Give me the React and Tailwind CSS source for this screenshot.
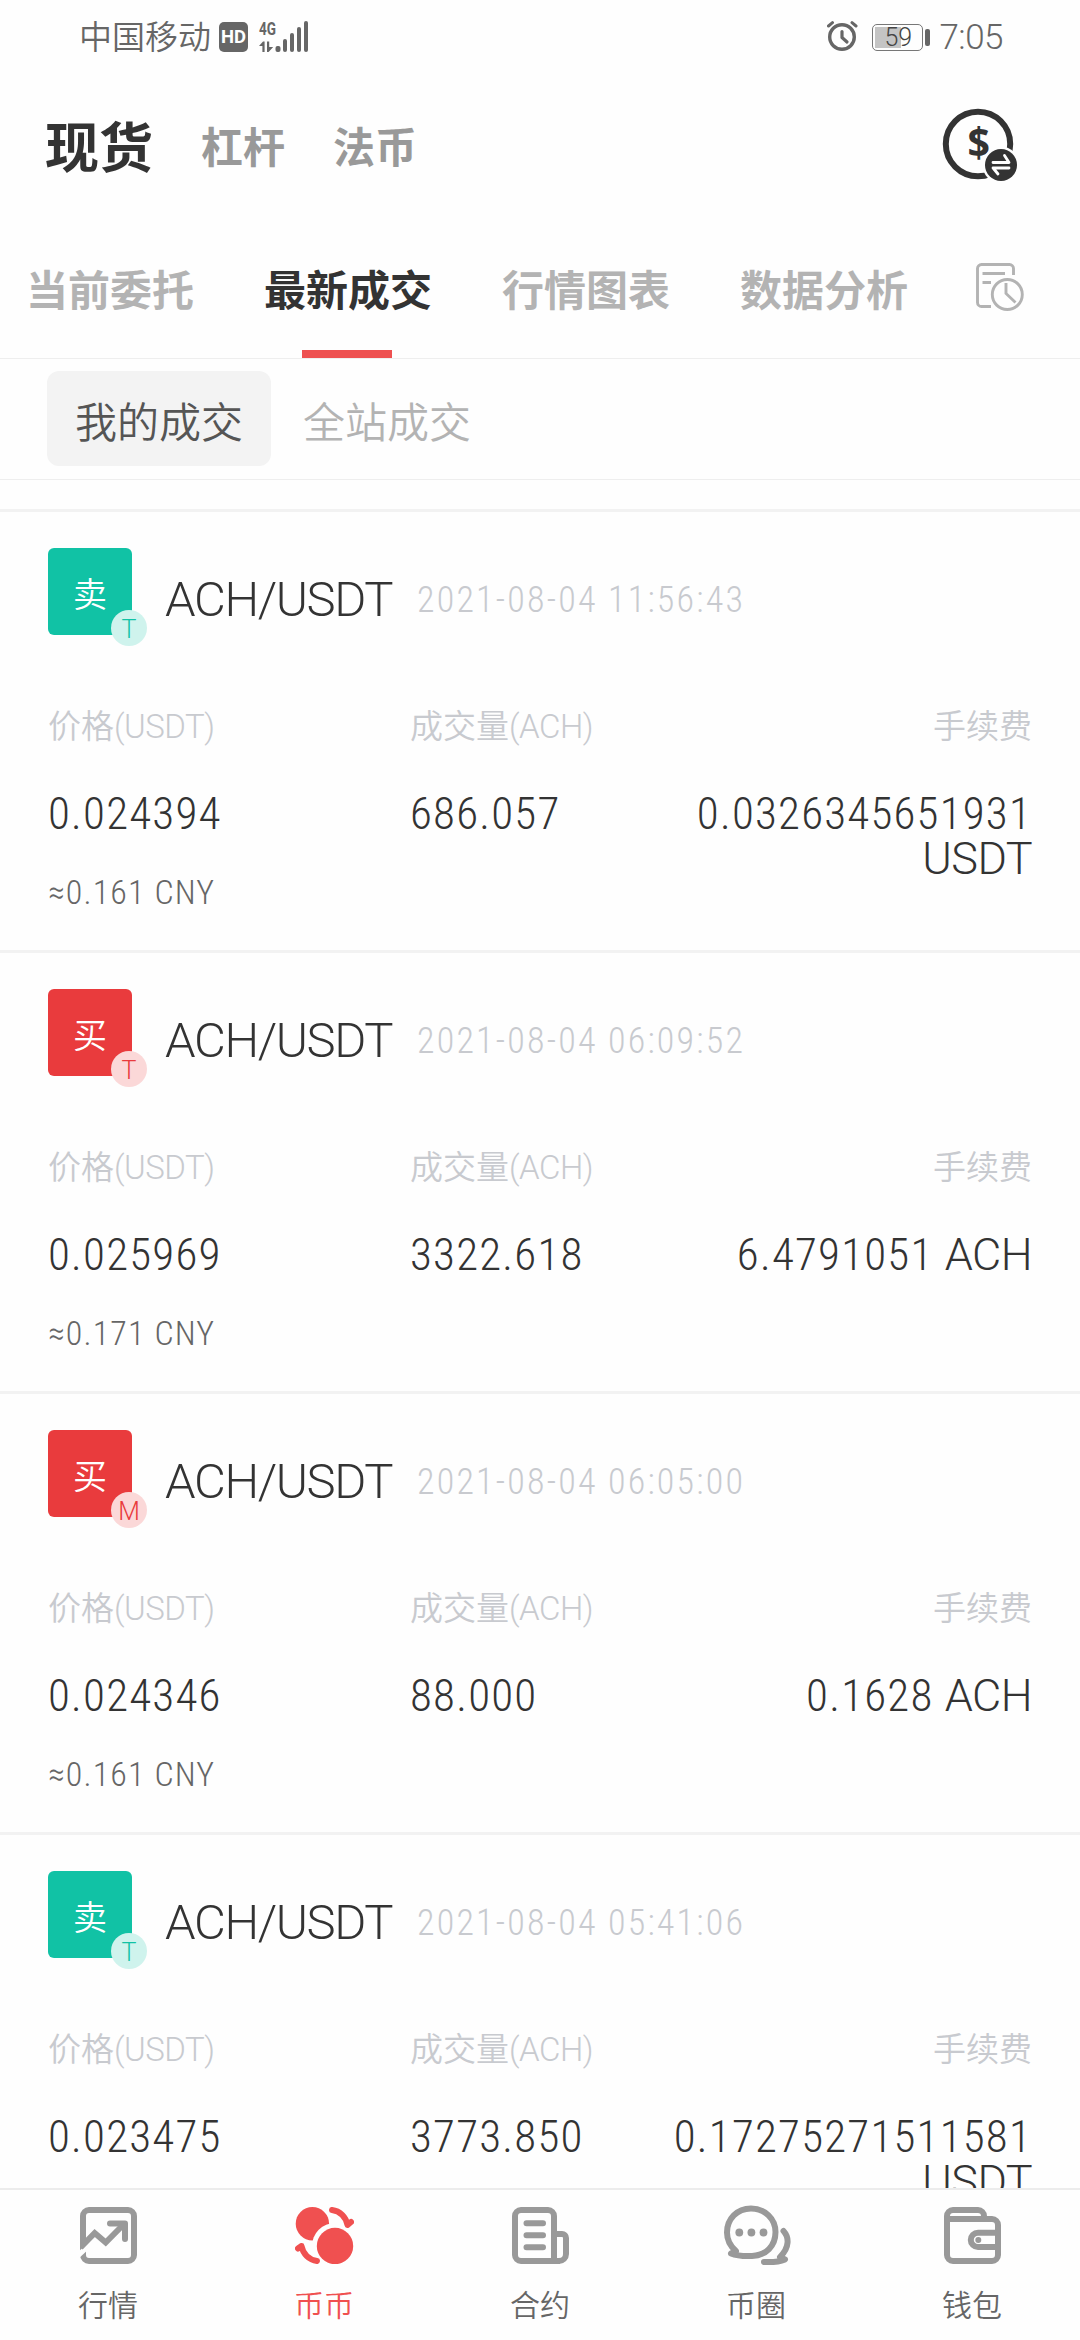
/**
 * Spot trading screen – "my trades" list.
 * All building-blocks live in this one file.
 */

/* ── Data ────────────────────────────────────────────────────────────── */
const TRADES = [
  { side: 'sell', role: 'T', time: '2021-08-04 11:56:43', price: '0.024394', cny: '0.161', amount: '686.057', fee: '0.0326345651931', unit: 'USDT' },
  { side: 'buy', role: 'T', time: '2021-08-04 06:09:52', price: '0.025969', cny: '0.171', amount: '3322.618', fee: '6.4791051', unit: 'ACH' },
  { side: 'buy', role: 'M', time: '2021-08-04 06:05:00', price: '0.024346', cny: '0.161', amount: '88.000', fee: '0.1628', unit: 'ACH' },
  { side: 'sell', role: 'T', time: '2021-08-04 05:41:06', price: '0.023475', amount: '3773.850', fee: '0.17275271511581', unit: 'USDT' },
]

const TABS = ['当前委托', '最新成交', '行情图表', '数据分析']

/* ── Status bar ──────────────────────────────────────────────────────── */
function SignalIcon() {
  return (
    <svg width="50" height="32" viewBox="0 0 50 32" fill="#666" className="ml-[11px] overflow-visible">
      <text x="0" y="13.5" fontSize="19" fontWeight="700" textLength="17" lengthAdjust="spacingAndGlyphs">4G</text>
      <path d="M0 25l4-4.5h1.6V31H3.4v-6zM8 20.5h2.2v5.5h4L9.6 31H8z" />
      <rect x="16.5" y="25" width="5" height="6" rx="2" />
      <rect x="24" y="18" width="4" height="13" rx="2" />
      <rect x="31" y="12" width="4" height="19" rx="2" />
      <rect x="38" y="6" width="4" height="25" rx="2" />
      <rect x="45" y="0" width="4" height="31" rx="2" />
    </svg>
  )
}

function AlarmIcon() {
  return (
    <svg width="31" height="32" viewBox="0 0 31 32" fill="none" stroke="#666" strokeLinecap="round">
      <circle cx="15" cy="16" r="12.3" strokeWidth="3.4" />
      <path d="M15 10.5V16.5L20 21" strokeWidth="3.2" strokeLinejoin="round" />
      <path d="M1.5 5L5.5 1.7M25 1.7L29 5" strokeWidth="3" />
    </svg>
  )
}

function StatusBar() {
  return (
    <div className="flex h-[74px] shrink-0 items-center pr-[77px] pl-[79px] text-[#666]">
      <span className="text-[33px] leading-none font-[350]">中国移动</span>
      <span className="ml-2 flex h-[30px] w-[29px] items-center justify-center rounded-[5px] bg-[#666] text-[18.5px] leading-none font-bold text-white">
        HD
      </span>
      <SignalIcon />
      <div className="ml-auto flex items-center">
        <AlarmIcon />
        <div className="ml-[14px] flex h-[27px] w-[51px] items-center rounded-[5px] border-[1.5px] border-[#777] p-[2px]">
          <div className="flex h-full w-[26px] items-center bg-[#c4c4c4] pl-[9px] text-[25px] leading-none font-light text-[#444]">59</div>
        </div>
        <div className="ml-[2px] h-[17px] w-[5px] rounded-[2px] bg-[#666]" />
        <span className="ml-[9px] text-[35px] leading-none font-[350] tracking-[-0.5px]">7:05</span>
      </div>
    </div>
  )
}

/* ── Header ──────────────────────────────────────────────────────────── */
function ExchangeIcon() {
  return (
    <svg width="76" height="74" viewBox="0 0 76 74" fill="none">
      <circle cx="36" cy="36" r="32.2" stroke="#333" strokeWidth="6" />
      <text x="25.5" y="49" fontSize="42" fontWeight="700" textLength="22.5" lengthAdjust="spacingAndGlyphs" fill="#333" fontFamily="Noto Sans, sans-serif">$</text>
      <circle cx="59" cy="57" r="18.5" fill="#fefefe" />
      <circle cx="59" cy="57" r="16" fill="#333" />
      <path d="M51 54.500H67L62.500 47.500M67 60H51M51.500 60.500L56 66" stroke="#fff" strokeWidth="2.800" strokeLinecap="round" strokeLinejoin="round" />
    </svg>
  )
}

function Header() {
  return (
    <header className="flex h-[148px] shrink-0 items-center gap-12 pr-[62px] pl-[45px] font-bold">
      <h1 className="pt-[3px] text-[54px] leading-none text-[#333]">现货</h1>
      <span className="pt-[2px] text-[42px] leading-none text-[#999]">杠杆</span>
      <span className="pt-[2px] text-[42px] leading-none text-[#999]">法币</span>
      <div className="ml-auto pb-[6px]">
        <ExchangeIcon />
      </div>
    </header>
  )
}

/* ── Tabs ────────────────────────────────────────────────────────────── */
function OrderHistoryIcon() {
  return (
    <svg width="48" height="48" viewBox="0 0 48 48" fill="none" stroke="#b3b3b3" strokeWidth="2.9">
      <path d="M37.500 12V5.500a4 4 0 0 0-4-4H5.500a4 4 0 0 0-4 4V39.500a4 4 0 0 0 4 4H15M6.500 10.500H29M6.500 19.500H15" />
      <circle cx="31.3" cy="31.5" r="15" />
      <path d="M30 20V30.500L39.500 39.500" />
    </svg>
  )
}

function TabBar({ active }) {
  return (
    <nav className="flex h-[137px] shrink-0 border-b border-[#eee] pl-[26px]">
      <div className="flex gap-[70px]">
        {TABS.map((label, i) => (
          <div
            key={label}
            className={`relative flex items-center pt-1 text-[42px] leading-none font-bold ${i === active ? 'text-[#333]' : 'text-[#b3b3b3]'}`}
          >
            {label}
            {i === active && <span className="absolute bottom-0 left-[38px] h-2 w-[90px] bg-[#ee5050]" />}
          </div>
        ))}
      </div>
      <div className="ml-[68px] flex items-center pb-[6px]">
        <OrderHistoryIcon />
      </div>
    </nav>
  )
}

function ScopeSwitch() {
  return (
    <div className="flex h-[121px] shrink-0 items-center border-b border-[#eee] pb-px pl-[47px] text-[42px] leading-none font-[350]">
      <span className="flex h-[95px] w-[224px] items-center justify-center rounded-xl bg-[#f3f3f3] pt-[10px] text-[#555]">我的成交</span>
      <span className="ml-8 pt-[10px] text-[#b3b3b3]">全站成交</span>
    </div>
  )
}

/* ── Trade row ───────────────────────────────────────────────────────── */
function SideBadge({ side, role }) {
  const map = {
    sell: { text: '卖', box: 'bg-[#11c2a5]', dot: 'bg-[#cff3ed] text-[#11c2a5]' },
    buy: { text: '买', box: 'bg-[#e93b3d]', dot: 'bg-[#fbd8d8] text-[#e93b3d]' },
  }
  const s = map[side]
  return (
    <div className={`relative flex h-[87px] w-[84px] items-center justify-center rounded-md pt-[7px] text-[34px] leading-none text-white ${s.box}`}>
      {s.text}
      <span className={`absolute -right-[15px] -bottom-[11px] flex size-9 items-center justify-center rounded-full pt-[2px] text-[25px] font-[350] ${s.dot}`}>
        {role}
      </span>
    </div>
  )
}

function TradeRow({ trade }) {
  return (
    <li className="h-[441px] shrink-0 border-t-[3px] border-[#f2f2f2] px-12 pt-9 font-[350]">
      <div className="flex items-center">
        <SideBadge side={trade.side} role={trade.role} />
        <span className="ml-[33px] w-[252px] pt-4 text-[49px] leading-none tracking-[-1.4px] text-[#333]">ACH/USDT</span>
        <span className="pt-4 text-[36px] leading-none tracking-[2.2px] text-[#c8cacf] [font-stretch:85%]">{trade.time}</span>
      </div>
      <div className="mt-[74px] flex text-[33px] leading-9 text-[#c8cacf]">
        <span className="w-[362px]">价格<span className="tracking-[-0.5px]">(USDT)</span></span>
        <span className="w-[274px]">成交量<span className="tracking-[-0.5px]">(ACH)</span></span>
        <span className="flex-1 text-right">手续费</span>
      </div>
      <div className="mt-[46px] flex h-[84px] text-[45px] leading-[45px] tracking-[1.2px] text-[#333] [font-stretch:85%]">
        <span className="w-[362px]">{trade.price}</span>
        <span className="w-[240px]">{trade.amount}</span>
        <span className="flex-1 text-right">
          {trade.fee} <span className="tracking-[-0.6px] [font-stretch:100%]">{trade.unit}</span>
        </span>
      </div>
      {trade.cny && (
        <div className="text-[34px] leading-none tracking-[1.1px] text-[#666] [font-stretch:85%]">≈{trade.cny} CNY</div>
      )}
    </li>
  )
}

/* ── Bottom navigation ───────────────────────────────────────────────── */
function MarketIcon() {
  return (
    <svg width="57" height="57" viewBox="0 0 57 57" fill="none" stroke="#999" strokeWidth="6">
      <rect x="3" y="3" width="51" height="51" rx="6" />
      <path d="M-3 49.500L9 38.500" stroke="#fefefe" strokeWidth="5" />
      <path d="M0.500 40.500L14.700 26L25.700 35.500L43.500 17.500" />
      <path d="M30 16.500H45V32" strokeLinecap="round" strokeLinejoin="round" />
    </svg>
  )
}

function CoinsIcon() {
  return (
    <svg width="59" height="57" viewBox="0 0 59 57" fill="none" stroke="#f05050" strokeWidth="6" strokeLinecap="round" strokeLinejoin="round">
      <circle cx="17.4" cy="16.7" r="16.7" fill="#f05050" stroke="none" />
      <circle cx="40" cy="39" r="23" fill="#fefefe" stroke="none" />
      <circle cx="40" cy="39" r="18.2" fill="#f05050" stroke="none" />
      <path d="M37 3C45 4 51 10 52.500 18L56 15" />
      <path d="M22 54C14 53 8 47 6.500 39L3 41.500" />
    </svg>
  )
}

function ContractIcon() {
  return (
    <svg width="57" height="57" viewBox="0 0 57 57" fill="none" stroke="#999" strokeWidth="6">
      <path d="M48 54H9a6 6 0 0 1-6-6V9a6 6 0 0 1 6-6H36a6 6 0 0 1 6 6V54" />
      <path d="M42 27H50a4 4 0 0 1 4 4V47a7 7 0 0 1-7 7" />
      <path d="M14.500 16.300H31M14.500 28.300H31M14.500 40.300H31" strokeLinecap="round" />
    </svg>
  )
}

function CommunityIcon() {
  return (
    <svg width="68" height="61" viewBox="0 0 68 61" fill="none" stroke="#999" strokeWidth="6" strokeLinecap="round" strokeLinejoin="round" className="ml-[3px]">
      <path d="M12 46C6 41 3 35 3 27.500C3 14 13 3.500 27 3.500S51.500 14 51.500 27C51.500 41 42 50.500 28 51C20 51.300 13 51 7 48.500L12 46Z" />
      <path d="M59.500 26C65 32 66 42 56 52L61 54.500C54 57.500 47 57.300 40 57" />
      <g fill="#999" stroke="none">
        <circle cx="15.3" cy="27.5" r="3.9" />
        <circle cx="27.4" cy="27.5" r="3.9" />
        <circle cx="39.5" cy="27.5" r="3.9" />
      </g>
    </svg>
  )
}

function WalletIcon() {
  return (
    <svg width="57" height="57" viewBox="0 0 57 57" fill="none" stroke="#999" strokeWidth="6">
      <path d="M3 12V9a6 6 0 0 1 6-6H34a6 6 0 0 1 6 6v3" />
      <path d="M3 12H48a6 6 0 0 1 6 6V48a6 6 0 0 1-6 6H9a6 6 0 0 1-6-6Z" />
      <path d="M54 25.700H34a7.200 7.200 0 0 0 0 14.400H54" />
      <circle cx="34.3" cy="33" r="3" fill="#999" stroke="none" />
    </svg>
  )
}

const NAV = [
  { label: '行情', icon: MarketIcon },
  { label: '币币', icon: CoinsIcon, active: true },
  { label: '合约', icon: ContractIcon },
  { label: '币圈', icon: CommunityIcon },
  { label: '钱包', icon: WalletIcon },
]

function BottomNav() {
  return (
    <nav className="flex h-[152px] shrink-0 border-t-2 border-[#ececec] bg-[#fefefe]">
      {NAV.map(({ label, icon: Icon, active }) => (
        <div key={label} className="flex flex-1 flex-col items-center pt-[13px]">
          <div className="flex h-[65px] items-center">
            <Icon />
          </div>
          <span className={`mt-[23px] text-[30px] leading-none font-[350] ${active ? 'text-[#f05050]' : 'text-[#666]'}`}>{label}</span>
        </div>
      ))}
    </nav>
  )
}

export default function App() {
  return (
    <div className="flex h-[2340px] w-[1080px] flex-col overflow-hidden bg-[#fefefe] font-['Roboto','Noto_Sans_CJK_SC',sans-serif]">
      <StatusBar />
      <Header />
      <TabBar active={1} />
      <ScopeSwitch />
      <ul className="flex flex-1 flex-col overflow-hidden pt-[29px]">
        {TRADES.map((t) => (
          <TradeRow key={t.time} trade={t} />
        ))}
      </ul>
      <BottomNav />
    </div>
  )
}
